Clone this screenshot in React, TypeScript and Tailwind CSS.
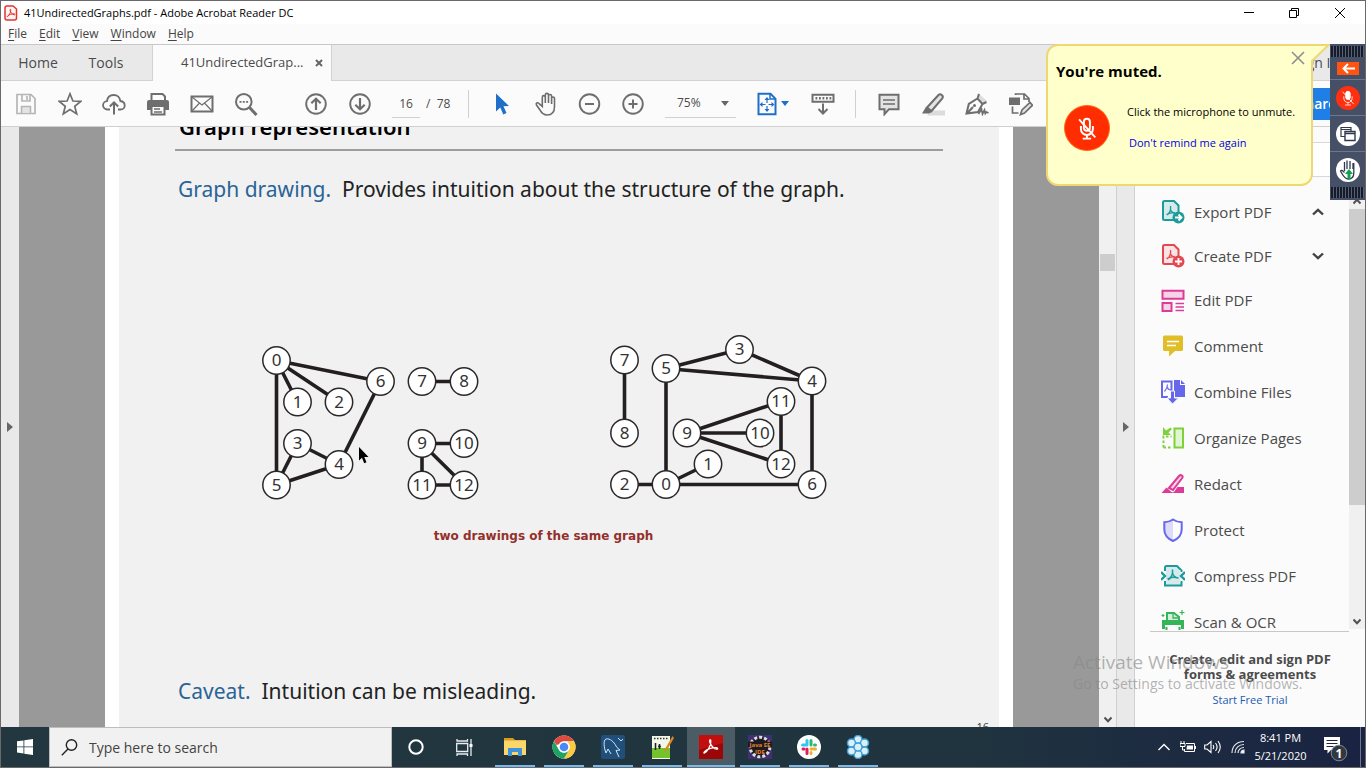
import React from "react";

const ui = "font-['Open_Sans','Noto_Sans',sans-serif]";
const slideFont = "font-['Noto_Sans','Open_Sans',sans-serif]";

type Point = [number, number];
type Graph = { nodes: Record<string, Point>; edges: [string, string][] };

const leftGraph: Graph = {
  nodes: {
    "0": [276.5, 360.5], "1": [297.5, 402], "2": [339, 402], "3": [297.5, 443.5],
    "4": [339, 464.5], "5": [276.5, 485], "6": [380.5, 381.5], "7": [422, 381.5],
    "8": [464, 381.5], "9": [422, 443.5], "10": [464, 443.5], "11": [422, 485], "12": [464, 485],
  },
  edges: [
    ["0", "6"], ["0", "2"], ["0", "1"], ["0", "5"], ["3", "5"], ["3", "4"], ["5", "4"],
    ["6", "4"], ["7", "8"], ["9", "10"], ["9", "11"], ["9", "12"], ["11", "12"],
  ],
};

const rightGraph: Graph = {
  nodes: {
    "0": [666, 484.5], "1": [708, 464], "2": [624.5, 484.5], "3": [739.5, 349.5],
    "4": [812, 381], "5": [666, 368.5], "6": [812, 484.5], "7": [624.5, 360],
    "8": [624.5, 433], "9": [687, 433], "10": [760, 433], "11": [781, 401.5], "12": [781, 464],
  },
  edges: leftGraph.edges,
};

function GraphDrawing({ graph }: { graph: Graph }) {
  return (
    <g>
      {graph.edges.map(([a, b]) => (
        <line
          key={a + "-" + b}
          x1={graph.nodes[a][0]} y1={graph.nodes[a][1]}
          x2={graph.nodes[b][0]} y2={graph.nodes[b][1]}
          stroke="#231f20" strokeWidth="3.6"
        />
      ))}
      {Object.entries(graph.nodes).map(([label, [x, y]]) => (
        <g key={label}>
          <circle cx={x} cy={y} r="13.7" fill="#fff" stroke="#2b2829" strokeWidth="1.5" />
          <text x={x} y={y + 5.5} textAnchor="middle" fontSize="17" fill="#333">{label}</text>
        </g>
      ))}
    </g>
  );
}

function Icon({ children, size = "size-6" }: { children: React.ReactNode; size?: string }) {
  return (
    <svg viewBox="0 0 24 24" className={size + " shrink-0"} fill="none" stroke="currentColor" strokeWidth="2" aria-hidden="true">
      {children}
    </svg>
  );
}

function ToolButton({ label, className = "w-11", children }: { label: string; className?: string; children: React.ReactNode }) {
  return (
    <button aria-label={label} className={"flex h-full shrink-0 items-center justify-center " + className}>
      {children}
    </button>
  );
}

function MenuBar() {
  return (
    <nav className="flex h-5 shrink-0 items-center gap-3 bg-[#fbfbfb] px-[7px] text-[12px] leading-4 text-[#444]">
      {["File", "Edit", "View", "Window", "Help"].map((m) => (
        <button key={m}>
          <span className="underline underline-offset-2">{m[0]}</span>
          {m.slice(1)}
        </button>
      ))}
    </nav>
  );
}

function TitleBar() {
  return (
    <header className="flex h-[23px] shrink-0 items-center bg-white pl-[3px]">
      <svg viewBox="0 0 14 16" className="h-4 w-3.5" fill="none" aria-hidden="true">
        <path d="M3 1h6l3.500 3v9a2 2 0 0 1-2 2H3a2 2 0 0 1-2-2V3a2 2 0 0 1 2-2z" fill="#fff5f5" stroke="#e5322d" strokeWidth="1.5" />
        <path d="M3.500 11.500c1-.3 3.300-3.500 3.300-6.500 0-1-1-.8-.8.3.4 2 2.500 4.500 4.500 4.500.7 0 .7-1-.5-1-2 0-5 .7-6.500 2.200-.4.500-.3.700 0 .5z" stroke="#e5322d" strokeWidth="1" />
      </svg>
      <h1 className="ml-[6px] flex-1 text-[11px] leading-4 text-black">41UndirectedGraphs.pdf - Adobe Acrobat Reader DC</h1>
      <button aria-label="Minimize" className="flex w-[45px] justify-center">
        <svg viewBox="0 0 12 12" className="size-3" stroke="#000" aria-hidden="true"><path d="M1 5.500h10" /></svg>
      </button>
      <button aria-label="Restore" className="flex w-[46px] justify-center">
        <svg viewBox="0 0 12 12" className="size-3" stroke="#000" fill="none" aria-hidden="true"><path d="M1.500 3.500h7v7h-7zM3.500 3V1.500h7v7H9" /></svg>
      </button>
      <button aria-label="Close" className="flex w-[46px] justify-center">
        <svg viewBox="0 0 12 12" className="size-3" stroke="#000" aria-hidden="true"><path d="M1 1l10 10M11 1L1 11" /></svg>
      </button>
      <span className="w-[2px]" />
    </header>
  );
}

function TabStrip() {
  return (
    <div className="flex h-[37px] shrink-0 border-t border-[#c8c8c8] bg-[#e9e9e9] text-[14px] text-[#4b4b4b]">
      <button className="w-[74px] border-b border-[#d2d2d2]">Home</button>
      <button className="w-[62px] border-b border-[#d2d2d2]">Tools</button>
      <span className="w-[15px] border-b border-[#d2d2d2]" />
      <div className="flex w-[180px] items-center border-x border-[#d2d2d2] bg-[#fbfbfb] pl-7">
        <button className="w-[126px] text-left text-[13px]">41UndirectedGrap...</button>
        <button aria-label="Close tab" className="ml-2">
          <svg viewBox="0 0 8 8" className="size-2" stroke="#666" strokeWidth="2" aria-hidden="true"><path d="M1 1l6 6M7 1L1 7" /></svg>
        </button>
      </div>
      <div className="flex flex-1 items-center justify-end border-b border-[#d2d2d2] pr-[26px]">
        <button>Sign In</button>
      </div>
    </div>
  );
}

function Toolbar() {
  return (
    <div className="flex h-[46px] shrink-0 items-center border-b border-[#d0d0d0] bg-[#fbfbfb] pl-[3px] text-[#6e6e6e]">
      <ToolButton label="Save">
        <span className="text-[#b5b5b5]">
          <Icon><path d="M3 2.500h14l4 4V21.500H3zM8 3v6h8V3M13 4v4" strokeWidth="1.700" /><path d="M7.500 21v-6.500h9V21" fill="#e3e3e3" strokeWidth="1.500" /></Icon>
        </span>
      </ToolButton>
      <ToolButton label="Star">
        <Icon><path d="M12 1.800l2.900 7.200 7.800.4-6 4.900 2 7.600L12 17.600l-6.700 4.300 2-7.600-6-4.900 7.800-.4z" strokeWidth="1.700" /></Icon>
      </ToolButton>
      <ToolButton label="Upload">
        <Icon><path d="M8 17.500H5.500a4.200 4.200 0 0 1-.5-8.400C5.500 5 8.500 3 11.800 3c3.600 0 6.200 2.500 6.500 6 2.500.3 4.400 2 4.400 4.400 0 2.300-1.700 4.100-4.200 4.100H16" strokeWidth="1.800" /><path d="M12 22.500V11M7.800 14.500l4.200-4 4.200 4" /></Icon>
      </ToolButton>
      <ToolButton label="Print">
        <Icon><path d="M5.500 8V2h11l2.500 2.500V8" /><path d="M3 8h18a2 2 0 0 1 2 2v8h-4v-4H5v4H1v-8a2 2 0 0 1 2-2z" fill="currentColor" stroke="none" /><path d="M5.500 14h13v8.500h-13z" fill="#fbfbfb" /><path d="M8 17h6M8 20h8" strokeWidth="1.300" /></Icon>
      </ToolButton>
      <ToolButton label="Email">
        <Icon><path d="M1.500 4.500h21v15h-21z" /><path d="M2 5l10 8L22 5M2 19l7.500-8M22 19l-7.500-8" strokeWidth="1.200" /></Icon>
      </ToolButton>
      <ToolButton label="Find">
        <Icon><circle cx="9.800" cy="9.800" r="7.800" /><path d="M15.500 15.500l7 7.500" strokeWidth="3" /><path d="M5.500 9.800h9" strokeDasharray="2 1.300" strokeWidth="1.800" /></Icon>
      </ToolButton>
      <span className="w-[26px]" />
      <ToolButton label="Previous page">
        <Icon><circle cx="12" cy="12" r="9.800" strokeWidth="1.900" /><path d="M12 18V7M7.300 11.200L12 6.800l4.700 4.400" strokeWidth="2.200" /></Icon>
      </ToolButton>
      <ToolButton label="Next page">
        <Icon><circle cx="12" cy="12" r="9.800" strokeWidth="1.900" /><path d="M12 6v11M7.300 12.800l4.700 4.400 4.700-4.400" strokeWidth="2.200" /></Icon>
      </ToolButton>
      <input aria-label="Page number" defaultValue="16" className="ml-[10px] h-7 w-7 border-b border-[#d0d0d0] bg-transparent text-center text-[12px] text-[#4b4b4b]" />
      <span className="ml-[6px] w-[37px] whitespace-pre text-[12px] text-[#4b4b4b]">/  78</span>
      <span className="mr-[11px] ml-[5px] h-7 w-px bg-[#d0d0d0]" />
      <ToolButton label="Select">
        <Icon><path d="M6 1.500l13 12.500-5.500.3 3 6.700-3.200 1.400-3-6.800L6 19.500z" fill="#1f6fc9" stroke="none" /></Icon>
      </ToolButton>
      <ToolButton label="Pan">
        <Icon><path d="M7.300 14.500V5.300c0-2.200 3-2.200 3 0V11 3c0-2.200 3.200-2.200 3.200 0v8-7c0-2.100 3.100-2.100 3.100 0v8-5.500c0-2 2.900-2 2.900 0v8c0 5-2.500 8.500-7.300 8.500-4.200 0-6-2.500-7.400-5.300L1.500 13c-1-1.800 1-3 2.300-1.700z" transform="translate(1 0)" strokeWidth="1.600" /></Icon>
      </ToolButton>
      <ToolButton label="Zoom out">
        <Icon><circle cx="11.500" cy="12" r="9.800" strokeWidth="1.900" /><path d="M7 12h9" /></Icon>
      </ToolButton>
      <ToolButton label="Zoom in" className="w-[42px]">
        <Icon><circle cx="12" cy="12" r="9.800" strokeWidth="1.900" /><path d="M7.500 12h9M12 7.500v9" /></Icon>
      </ToolButton>
      <div className="ml-[11px] flex h-7 w-[71px] items-center border-b border-[#d0d0d0] pr-[7px] pl-3">
        <select aria-label="Zoom level" className="flex-1 appearance-none bg-transparent text-[12px] text-[#4b4b4b]">
          <option>75%</option>
        </select>
        <svg viewBox="0 0 8 5" className="h-[5px] w-2" fill="#666" aria-hidden="true"><path d="M0 0h8L4 5z" /></svg>
      </div>
      <button aria-label="Fit page" className="ml-[19px] flex w-[46px] items-center gap-[2px] text-[#1f6fc9]">
        <Icon>
          <path d="M3.500 1.800h12l5 5v15.400h-17z" /><path d="M15 2v5h5" strokeWidth="1.500" />
          <path d="M12 6.500v12M6 12.500h12" strokeWidth="1.200" strokeDasharray="4.500 3" /><path d="M12 5l2.500 3h-5zM12 20l2.500-3h-5zM4.500 12.500l3-2.500v5zM19.500 12.500l-3-2.500v5z" fill="currentColor" stroke="none" />
        </Icon>
        <svg viewBox="0 0 8 5" className="h-[5px] w-2" fill="currentColor" aria-hidden="true"><path d="M0 0h8L4 5z" /></svg>
      </button>
      <ToolButton label="Page display">
        <Icon><path d="M1.500 2.800h21v7h-21z" /><path d="M4.500 6.300h16" strokeWidth="2.400" strokeDasharray="1.800 1.700" /><path d="M12 11.500V21M7.500 17l4.500 4.500 4.500-4.500" /></Icon>
      </ToolButton>
      <span className="mr-[11px] ml-[10px] h-7 w-px bg-[#d0d0d0]" />
      <ToolButton label="Comment">
        <Icon><path d="M2.500 2.800h19v14.400h-9.500l-4.500 5v-5h-5z" fill="#e3e3e3" /><path d="M6 8h12M6 12h12" strokeWidth="1.400" /></Icon>
      </ToolButton>
      <ToolButton label="Highlight">
        <Icon><path d="M10 18.500h14v5H6z" fill="#dcdcdc" stroke="none" /><path d="M6 15.500L17.500 3c2-2 5.500 1 3.800 3.300L10.500 19z" fill="#e3e3e3" /><path d="M5 15l6 5-3 1.500H1z" fill="currentColor" stroke="none" /></Icon>
      </ToolButton>
      <ToolButton label="Sign">
        <Icon><path d="M13 1l9 8-3.500 2.500-6-6z" fill="#dcdcdc" stroke="none" /><path d="M1.500 21.500l2.300-9.500 8.700-5.500 5 5.500-4.500 8zM12.500 6.500L14 2M17.500 12l4-2M2 21.500l6-6.500" /><circle cx="9.500" cy="13.500" r="1.500" fill="currentColor" stroke="none" /><path d="M13.500 22l3-5 1 5 2-4 .8 3.500 1.200-1.500 2 1" strokeWidth="1.700" /></Icon>
      </ToolButton>
      <ToolButton label="Organize">
        <Icon><path d="M1 6.500h9v5.500H1z" fill="currentColor" /><path d="M6.500 3V2h9l4.500 4.500V10M15 2v5h5M3.500 14.500v6.500h6" strokeWidth="1.700" /><path d="M11.500 22.500l1.500-4.500 8-7.500 2.500 2.700-8 7.800z" fill="#e3e3e3" strokeWidth="1.700" /></Icon>
      </ToolButton>
      <div className="flex flex-1 justify-end pr-2">
        <button className="h-8 w-20 rounded-xs bg-[#1f7fe6] text-[14px] font-semibold text-white">Share</button>
      </div>
    </div>
  );
}

function Slide() {
  return (
    <article className={"flex-1 bg-[#f1f1f1] px-14 text-[21px] leading-7 text-[#222] " + slideFont}>
      <h2 className="px-1 text-[22px] leading-7 font-semibold text-black">Graph representation</h2>
      <hr className="mt-[9px] border-t-2 border-[#9d9d9d]" />
      <p className="mt-6 px-[3px] whitespace-pre"><span className="text-[#2a6496]">Graph drawing.</span>  Provides intuition about the structure of the graph.</p>
      <div className="relative mt-[127px] ml-20">
        <svg viewBox="255 330 580 175" className="h-[175px] w-[580px]" role="img" aria-label="Two drawings of one graph">
          <GraphDrawing graph={leftGraph} />
          <GraphDrawing graph={rightGraph} />
        </svg>
        <svg viewBox="0 0 10 17" className="absolute top-[117px] left-[104px] h-[17px] w-[10px]" aria-hidden="true">
          <path d="M0 0v13.500l3-2.700 2.200 5.400 2.300-1-2.200-5.200H9.500z" fill="#000" />
        </svg>
      </div>
      <p className="mt-[21px] pr-[31px] text-center font-['DejaVu_Sans',sans-serif] text-[12px] leading-5 font-bold text-[#93302c]">two drawings of the same graph</p>
      <p className="mt-[131px] px-[3px] whitespace-pre"><span className="text-[#2a6496]">Caveat.</span>  Intuition can be misleading.</p>
      <p className="-mr-[46px] mt-[14px] text-right text-[11px] leading-4 text-[#444]">16</p>
    </article>
  );
}

function Chevron({ up = false }: { up?: boolean }) {
  return (
    <svg viewBox="0 0 12 8" className="h-2 w-3" fill="none" stroke="#444" strokeWidth="2.400" aria-hidden="true">
      <path d={up ? "M1 6.500L6 1.800l5 4.700" : "M1 1.500l5 4.700 5-4.700"} />
    </svg>
  );
}

function SmallChevron({ up = false }: { up?: boolean }) {
  return (
    <svg viewBox="0 0 8 7" className="h-[7px] w-2" fill="none" stroke="#505050" strokeWidth="2" aria-hidden="true">
      <path d={up ? "M.500 5.500L4 1.800l3.500 3.700" : "M.500 1.500L4 5.200l3.500-3.700"} />
    </svg>
  );
}

const acro = "M7 16c3-2 5-6 4.500-10.500M11.500 8c0 3 2.500 5.500 6 6M6.500 15c3-2 7-2 10.500-1";

const tools: { name: string; height: string; color: string; up?: boolean; more?: boolean; icon: React.ReactNode }[] = [
  { name: "Export PDF", height: "h-11", color: "text-[#1f9a9a]", up: true, more: true, icon: <><path d="M14 20H3.500a1.500 1.500 0 0 1-1.500-1.500v-16A1.500 1.500 0 0 1 3.500 1H13l4.500 4.500V12" fill="#d5ebeb" /><path d="M6 15c3-2 4-5 3.500-9M9.500 9c0 2 2 4 4.500 4M5.500 14.500c3-2 5-2 8-1.500" strokeWidth="1.300" /><circle cx="17.500" cy="17.500" r="6" fill="currentColor" stroke="none" /><path d="M14 17.500h6M17.500 14.500l3 3-3 3" stroke="#fff" strokeWidth="1.800" /></> },
  { name: "Create PDF", height: "h-11", color: "text-[#e34850]", more: true, icon: <><path d="M14 20H3.500a1.500 1.500 0 0 1-1.500-1.500v-16A1.500 1.500 0 0 1 3.500 1H13l4.500 4.500V12" fill="#fbe2e3" /><path d="M6 15c3-2 4-5 3.500-9M9.500 9c0 2 2 4 4.500 4M5.500 14.500c3-2 5-2 8-1.500" strokeWidth="1.300" /><circle cx="17.500" cy="17.500" r="6" fill="currentColor" stroke="none" /><path d="M14 17.500h7M17.500 14v7" stroke="#fff" strokeWidth="1.800" /></> },
  { name: "Edit PDF", height: "h-[45px]", color: "text-[#dc3c96]", icon: <><path d="M1.500 1.800h21v8h-21zM1.500 14h9v8h-9z" fill="#f7d3e7" /><path d="M14.500 14.500H23M14.500 18H23M14.500 21.500H23" strokeWidth="1.400" /></> },
  { name: "Comment", height: "h-[46px]", color: "text-[#e0be28]", icon: <><path d="M3.500 1.500h17A1.500 1.500 0 0 1 22 3v12.500a1.500 1.500 0 0 1-1.500 1.500H14l-6 5.500V17H3.500A1.500 1.500 0 0 1 2 15.500V3a1.500 1.500 0 0 1 1.500-1.500z" fill="currentColor" stroke="none" /><path d="M6 7.500h12M6 11.500h9" stroke="#fff" strokeWidth="1.700" /></> },
  { name: "Combine Files", height: "h-[46px]", color: "text-[#6767ec]", icon: <><path d="M7 17H1V1.500h9.500V15" /><path d="M3.500 11.500c2-2 3-4 3-7M6.500 7c0 2 1.500 3 4 3" strokeWidth="1.200" /><path d="M13 0h6v5h5v12H13z" fill="currentColor" stroke="none" /><path d="M20 0l4 4h-4z" fill="currentColor" stroke="none" /><path d="M9.500 11h4v7h4L11.500 24 6 18h3.500z" fill="currentColor" stroke="#fbfbfb" strokeWidth="1" /></> },
  { name: "Organize Pages", height: "h-[46px]", color: "text-[#7fd13b]", icon: <><path d="M13.500 2.500h8.500v19h-8.500z" fill="#e2f5d3" /><path d="M2.500 21.500v-11h8M2.500 21.500h8" strokeDasharray="2.500 2" /><path d="M2 1v8h8L7.500 6.500 11 3 9.500 1.500 5 4.500z" fill="currentColor" stroke="none" /></> },
  { name: "Redact", height: "h-[46px]", color: "text-[#dc3c96]", icon: <><path d="M8 16L18 4c2-2 4.500 0 3.200 2L12 18z" fill="#f7d3e7" /><path d="M5.500 15.500l6 5.500H.5zM13 20l3.500-5H23v6H9z" fill="currentColor" stroke="none" /></> },
  { name: "Protect", height: "h-[46px]", color: "text-[#6767ec]", icon: <><path d="M12 2v20.500c-5-2-8.500-6-8.500-12V4.500C7 4.500 9 3.500 12 2z" fill="#dcdcf9" stroke="none" /><path d="M12 1.500c3 2 5.500 2.700 8.700 2.800v7c0 5.500-3.500 9.500-8.700 11.700-5.200-2.200-8.700-6.200-8.700-11.700v-7C6.500 4.200 9 3.500 12 1.500z" /></> },
  { name: "Compress PDF", height: "h-[46px]", color: "text-[#1f9a9a]", icon: <><path d="M4 7V3.500A1.500 1.500 0 0 1 5.500 2H16l4.500 4.500V8M4 17v4.500h16.500V17" fill="#d5ebeb" /><path d="M5 6h14.500v12H5z" fill="#d5ebeb" stroke="none" /><path d={acro} strokeWidth="1.500" /><path d="M0 8l4 4-4 4M24 8l-4 4 4 4" strokeWidth="2.400" /></> },
  { name: "Scan & OCR", height: "h-[46px]", color: "text-[#35b558]", icon: <><path d="M6 10V3h7l5 4v3" fill="#d3f0da" /><path d="M12 3v5h6" strokeWidth="1.300" /><path d="M1 10h22v9h-3v-4H4v4H1z" fill="currentColor" stroke="none" /><path d="M5.500 17v6.500M18.500 17v6.500M5.500 22.500h13" strokeDasharray="3 2" /><path d="M21 0v5M18.500 2.500h5M2 4v3M.500 5.500h3" strokeWidth="1.200" /></> },
];

function ToolsPanel() {
  return (
    <aside className="flex w-[230px] shrink-0 flex-col bg-[#fbfbfb]">
      <input aria-label="Search tools" className="mt-[15px] h-[35px] w-full shrink-0 border-y border-[#d8d8d8] bg-white" />
      <div className="flex h-[454px] shrink-0">
        <div className="flex-1 overflow-hidden pt-[13px]">
          {tools.map((t) => (
            <button key={t.name} className={"flex w-full items-center pr-[25px] pl-[26px] text-left text-[15px] text-[#4b4b4b] " + t.height}>
              <span className={t.color}><Icon>{t.icon}</Icon></span>
              <span className="ml-[9px] flex-1 whitespace-nowrap">{t.name}</span>
              {t.more && <Chevron up={t.up} />}
            </button>
          ))}
        </div>
        <div className="mb-[2px] flex w-4 flex-col items-center bg-[#f0f0f0] pt-[21px]">
          <SmallChevron up />
          <span className="mt-1 h-[296px] w-full bg-[#cdcdcd]" />
          <span className="flex-1" />
          <span className="mb-1"><SmallChevron /></span>
        </div>
      </div>
      <hr className="mr-4 ml-[15px] border-[#c8c8c8]" />
      <div className="mt-5 text-center text-[13px] leading-[15px] text-[#4b4b4b]">
        <p className="font-bold">Create, edit and sign PDF<br />forms &amp; agreements</p>
        <a href="#trial" className="mt-[10px] inline-block text-[11px] text-[#1c5bb0]">Start Free Trial</a>
      </div>
    </aside>
  );
}

function Triangle() {
  return <svg viewBox="0 0 6 10" className="h-[10px] w-[6px]" fill="#666" aria-hidden="true"><path d="M0 0l6 5-6 5z" /></svg>;
}

function Mic() {
  return (
    <g fill="none" stroke="#fff">
      <rect x="9.500" y="4" width="5" height="10" rx="2.500" />
      <path d="M7 10v2.500a5 5 0 0 0 10 0V10M12 17.500V20M8.500 20.500h7M5.500 4.500l13.500 15" />
    </g>
  );
}

function Grip() {
  return <div className="mx-[1px] h-[11px] self-stretch bg-[repeating-linear-gradient(90deg,#151c28_0_2px,#566178_2px_3px)]" />;
}

function MeetingOverlay() {
  return (
    <div className="absolute top-[43px] right-0 flex items-start">
      <section className="relative mr-[17px] h-[142px] w-[267px] rounded-xl rounded-tr-none border-2 border-[#efd873] bg-[#ffffcc] text-black">
        <svg viewBox="0 0 26 24" className="absolute -top-[2px] -right-[19px] h-6 w-[26px]" aria-hidden="true">
          <path d="M0 1h25L8 17v7H0z" fill="#ffffcc" />
          <path d="M0 1h24.500L8 17v7" fill="none" stroke="#efd873" strokeWidth="2" />
        </svg>
        <button aria-label="Dismiss" className="absolute top-[5px] right-[6px]">
          <svg viewBox="0 0 14 14" className="size-3.5" stroke="#8d8d8d" strokeWidth="1.600" aria-hidden="true"><path d="M1 1l12 12M13 1L1 13" /></svg>
        </button>
        <h2 className="mt-[15px] ml-2 text-[15px] leading-5 font-bold">You're muted.</h2>
        <div className="mt-[23px] ml-4 flex items-center">
          <button aria-label="Unmute">
            <svg viewBox="0 0 46 46" className="size-[46px]" aria-hidden="true">
              <circle cx="23" cy="23" r="22.500" fill="#ff2d00" stroke="#ff6a1f" />
              <g transform="translate(8.500 9) scale(1.200)" strokeWidth="1.600"><Mic /></g>
            </svg>
          </button>
          <div className="ml-[17px] flex flex-col items-start gap-[15px] text-[11px] leading-4 whitespace-nowrap">
            <p>Click the microphone to unmute.</p>
            <a href="#mute" className="ml-[2px] text-[#0000e6]">Don't remind me again</a>
          </div>
        </div>
      </section>
      <div className="flex w-[35px] flex-col items-center bg-[#454f66] py-[2px]">
        <Grip />
        <button aria-label="Collapse" className="flex h-[23px] w-full items-center justify-center border-b border-[#6c7890]">
          <svg viewBox="0 0 22 13" className="h-[13px] w-[22px]" aria-hidden="true"><path d="M0 0h22v13H0z" fill="#ff5510" /><path d="M7 6.500h11M11 2L6.500 6.500 11 11" fill="none" stroke="#fff" strokeWidth="2" /></svg>
        </button>
        <button aria-label="Microphone" className="flex h-9 w-full items-center justify-center border-b border-[#6c7890]">
          <svg viewBox="0 0 24 24" className="size-6" aria-hidden="true"><circle cx="12" cy="12" r="12" fill="#ff3010" /><g transform="translate(2 2) scale(.83)"><rect x="9" y="4" width="6" height="10" rx="3" fill="#fff" /><Mic /></g></svg>
        </button>
        <button aria-label="Windows" className="flex h-9 w-full items-center justify-center border-b border-[#6c7890]">
          <svg viewBox="0 0 24 24" className="size-6" aria-hidden="true"><circle cx="12" cy="12" r="12" fill="#fff" /><path d="M5 5.500h10v9H5zM5 7.500h10" fill="#fff" stroke="#2f3a4f" strokeWidth="1.200" /><path d="M9 9.500h10v9H9zM9 11.500h10" fill="#fff" stroke="#2f3a4f" strokeWidth="1.400" /></svg>
        </button>
        <button aria-label="Raise hand" className="flex h-[35px] w-full items-center justify-center">
          <svg viewBox="0 0 24 24" className="size-6" aria-hidden="true"><circle cx="12" cy="12" r="12" fill="#fff" /><path d="M8.500 13V4M11 11V2.500M14 11V3M17 11V5M17.800 5v10c0 4-2.500 6-5.500 6-4 0-5.500-4-7.800-8 1-1.500 2.500 0 4 1.500" fill="none" stroke="#2f3a4f" strokeWidth="1.300" /><path d="M13 11l4 5h-2.500v5.500h-3V16H9z" fill="#12a14b" /></svg>
        </button>
        <Grip />
      </div>
    </div>
  );
}

const apps: { name: string; active?: boolean; icon: React.ReactNode }[] = [
  { name: "File Explorer", icon: <><path d="M1 3h9l2 2h11v3H1z" fill="#d99b1c" /><path d="M1 5.500h22V20H1z" fill="#fbd66b" /><path d="M5 21v-8h14v8h-4v-4H9v4z" fill="#3f93d6" /></> },
  { name: "Chrome", icon: <><circle cx="12" cy="12" r="11.500" fill="#fff" /><path d="M2 6.200A11.500 11.500 0 0 1 22 6.200H12A5.800 5.800 0 0 0 7 9.200L4.500 10z" fill="#dd4b3e" /><path d="M22 6.200A11.500 11.500 0 0 1 12 23.500l5-8.700A5.700 5.700 0 0 0 15.500 7.300L16 6.200z" fill="#fcca3f" /><path d="M2 6.200A11.500 11.500 0 0 0 12 23.500l5-8.600A5.800 5.800 0 0 1 7 15z" fill="#1ea362" /><circle cx="12" cy="12" r="5.500" fill="#fff" /><circle cx="12" cy="12" r="4.300" fill="#4a8af4" /></> },
  { name: "MySQL Workbench", icon: <><rect width="24" height="24" rx="2" fill="#1f4f7a" /><path d="M5 18C3 13 2 5 5 4c4-1 8 3 10 7 1 2 3 3 4 4l-4 .5 3 6.500M5 18l2-4 3 5M17 3l3 3 2-2" fill="none" stroke="#d5e6f3" strokeWidth="1" /></> },
  { name: "Notepad++", icon: <><path d="M2 1h18v23H2z" fill="#f3f6ea" /><path d="M2 13h18v10H2z" fill="#74c32d" /><path d="M4 3.500h14" stroke="#333" strokeDasharray="1.500 1.500" strokeWidth="1.500" /><path d="M5.500 8v7M8 11.500h3M9.500 9v5" stroke="#222" strokeWidth="1.600" /><path d="M22.500 1L15 14l-1 3 3-2L24 3z" fill="#d68a22" /></> },
  { name: "Acrobat Reader", active: true, icon: <><rect width="24" height="24" rx="1" fill="#c40d0d" /><path d="M0 15L24 8v16H0z" fill="#9c0606" /><path d="M5.500 18c3-1.500 7-8.500 6.300-12.500-.3-1.200-1.600-.7-1.200 1 .8 3.500 4.400 8 7.400 7.700 1.200-.2.700-1.500-1-1.500-3.500 0-8.500 1.300-11.500 4-.9 1-.6 1.500 0 1.300z" fill="none" stroke="#fff" strokeWidth="1.300" /></> },
  { name: "Eclipse", icon: <><path d="M0 0h24v24H0z" fill="#40306f" /><circle cx="12" cy="12" r="9.800" fill="#1d1a22" stroke="#ddd" strokeWidth="3" strokeDasharray="3 2" /><path d="M0 6.500h24v6H0z" fill="#1d1a22" /><text x="12" y="12" textAnchor="middle" fontSize="6" fontWeight="bold" fill="#e98327">Java EE</text><text x="12" y="18.500" textAnchor="middle" fontSize="6" fontWeight="bold" fill="#e98327">IDE</text></> },
  { name: "Slack", icon: <><circle cx="12" cy="12" r="12" fill="#fff" /><g strokeWidth="3" strokeLinecap="round"><path d="M10 5.500v4.500M5.500 10H9.500" stroke="#36c5f0" /><path d="M14 10V5.500M18.500 10h-1" stroke="#2eb67d" /><path d="M14 14h4.500M14 18.500v-1" stroke="#ecb22e" /><path d="M10 14v4.500M6 14h1" stroke="#e01e5a" /></g></> },
  { name: "GoToMeeting", icon: <><g fill="#d9effa" stroke="#3d9ed6" strokeWidth="1.500">{[[12, 4.500], [18.500, 8], [18.500, 16], [12, 19.500], [5.500, 16], [5.500, 8]].map(([x, y]) => <circle key={x + "," + y} cx={x} cy={y} r="4" />)}<circle cx="12" cy="12" r="4" /></g></> },
];

function Taskbar() {
  return (
    <footer className="flex h-10 shrink-0 items-stretch bg-linear-to-r from-[#22373f] via-[#20343f] via-70% to-[#1a2342] text-white">
      <button aria-label="Start" className="flex w-12 items-center justify-center">
        <svg viewBox="0 0 16 16" className="size-4" fill="#fff" aria-hidden="true"><path d="M0 2.300l6.500-.9v6.100H0zM7.300 1.300L16 0v7.500H7.300zM0 8.300h6.500v6.200L0 13.600zM7.300 8.300H16V16l-8.700-1.300z" /></svg>
      </button>
      <label className="flex w-[343px] items-center border border-[#bdbdbd] bg-[#f1f1f1] pl-[11px] text-[#222]">
        <svg viewBox="0 0 17 17" className="size-[17px]" fill="none" stroke="currentColor" strokeWidth="1.400" aria-hidden="true"><circle cx="10.500" cy="6" r="5.200" /><path d="M7 10L.8 16.300" /></svg>
        <input aria-label="Search" placeholder="Type here to search" className="ml-[11px] flex-1 bg-transparent text-[14px] placeholder:text-[#444]" />
      </label>
      <button aria-label="Cortana" className="flex w-12 items-center justify-center">
        <svg viewBox="0 0 16 16" className="size-4" aria-hidden="true"><circle cx="8" cy="8" r="6.700" fill="none" stroke="#fff" strokeWidth="2" /></svg>
      </button>
      <button aria-label="Task view" className="mr-[3px] flex w-12 items-center justify-center">
        <svg viewBox="0 0 17 17" className="size-[17px]" fill="none" stroke="#e8edf0" strokeWidth="1.300" aria-hidden="true"><path d="M.700 4.500h11v8H.700zM1 0v2h10.500V0M1 17v-2h10.500v2M15 0v17" /><path d="M13.500 5h3v3h-3z" fill="#fff" stroke="none" /></svg>
      </button>
      {apps.map((a) => (
        <button key={a.name} aria-label={a.name} className={"mr-px flex w-12 flex-col items-center justify-between " + (a.active ? "bg-[#4b5c64]" : "")}>
          <svg viewBox="0 0 24 24" className="mt-2 size-6" aria-hidden="true">{a.icon}</svg>
          <span className={"h-[2px] bg-[#76b9ed] " + (a.active ? "w-full" : "w-10")} />
        </button>
      ))}
      <div className="flex flex-1 items-center justify-end">
        <button aria-label="Hidden icons" className="flex w-6 justify-center"><svg viewBox="0 0 12 8" className="h-2 w-3" fill="none" stroke="#fff" strokeWidth="1.400" aria-hidden="true"><path d="M.500 7L6 1.500 11.500 7" /></svg></button>
        <button aria-label="Battery" className="flex w-6 justify-center"><svg viewBox="0 0 16 12" className="h-3 w-4" fill="none" stroke="#fff" aria-hidden="true"><path d="M6 2.500h8.500v8h-10V8M15.500 5v3" /><path d="M7 4.500h6v4H6.500z" fill="#fff" stroke="none" /><path d="M1 0v3M4 0v3M0 2.500h5v3H0zM2.500 5v4H5" /></svg></button>
        <button aria-label="Volume" className="flex w-[25px] justify-center"><svg viewBox="0 0 17 14" className="h-3.5 w-[17px]" fill="none" stroke="#fff" strokeWidth="1.100" aria-hidden="true"><path d="M.700 5H3l4-3.500v11L3 9H.700zM9 5c1 1.300 1 2.700 0 4M11.500 3c2 2.500 2 5.500 0 8M14 1c3 4 3 8 0 12" /></svg></button>
        <button aria-label="Network" className="flex w-[26px] justify-center"><svg viewBox="0 0 14 14" className="size-3.5" fill="none" stroke="#dfe5ee" strokeWidth="1.200" aria-hidden="true"><path d="M1 13C1 6 6 1.500 13 1.500M4 13c0-5 4-8.500 9-8.500M7 13c0-3 2.500-5.500 6-5.500" /><path d="M10 13a3 3 0 0 1 3-3v3z" fill="#fff" /></svg></button>
        <time className="w-[59px] text-center text-[11px] leading-[18px]">8:41 PM<br />5/21/2020</time>
        <button aria-label="Notifications" className="mr-[7px] ml-[7px] flex w-9 justify-center">
          <svg viewBox="0 0 26 26" className="mt-1 size-[26px]" aria-hidden="true"><path d="M2 1h16v13H9l-3.500 3.500V14H2z" fill="#fff" /><path d="M4.500 4.500h11M4.500 7.500h11M4.500 10.500h7" stroke="#1b2540" strokeWidth="1.200" /><circle cx="17" cy="17" r="7.800" fill="#33373f" stroke="#7c8796" /><text x="17" y="21.500" textAnchor="middle" fontSize="12" fontWeight="bold" fill="#fff">1</text></svg>
        </button>
        <span className="mr-1 h-full w-px bg-[#6c7890]" />
      </div>
    </footer>
  );
}

export default function App() {
  return (
    <div className={"relative flex h-screen flex-col overflow-hidden border border-[#6b686b] bg-[#e9e9e9] " + ui}>
      <TitleBar />
      <MenuBar />
      <TabStrip />
      <Toolbar />
      <main className="flex min-h-0 flex-1 overflow-hidden">
        <div className="flex w-[18px] shrink-0 items-center justify-center bg-[#e9e9e9]"><Triangle /></div>
        <div className="flex-1 overflow-hidden bg-[#999]">
          <div className="mx-auto -mt-[15px] flex w-[908px] bg-white px-[14px]">
            <Slide />
          </div>
        </div>
        <div className="flex w-[17px] shrink-0 flex-col items-center bg-[#f0f0f0] pb-1">
          <span className="mt-[127px] h-[17px] w-[15px] bg-[#cdcdcd]" />
          <span className="flex-1" />
          <SmallChevron />
        </div>
        <div className="flex w-[19px] shrink-0 items-center justify-center border-x border-[#d0d0d0] bg-[#e9e9e9]"><Triangle /></div>
        <ToolsPanel />
      </main>
      <Taskbar />
      <MeetingOverlay />
      <div className="pointer-events-none absolute right-[55px] bottom-[73px] w-[237px] whitespace-nowrap text-[#8a8a8a]/65">
        <p className="text-[19px] leading-6">Activate Windows</p>
        <p className="text-[14px] leading-5">Go to Settings to activate Windows.</p>
      </div>
    </div>
  );
}
